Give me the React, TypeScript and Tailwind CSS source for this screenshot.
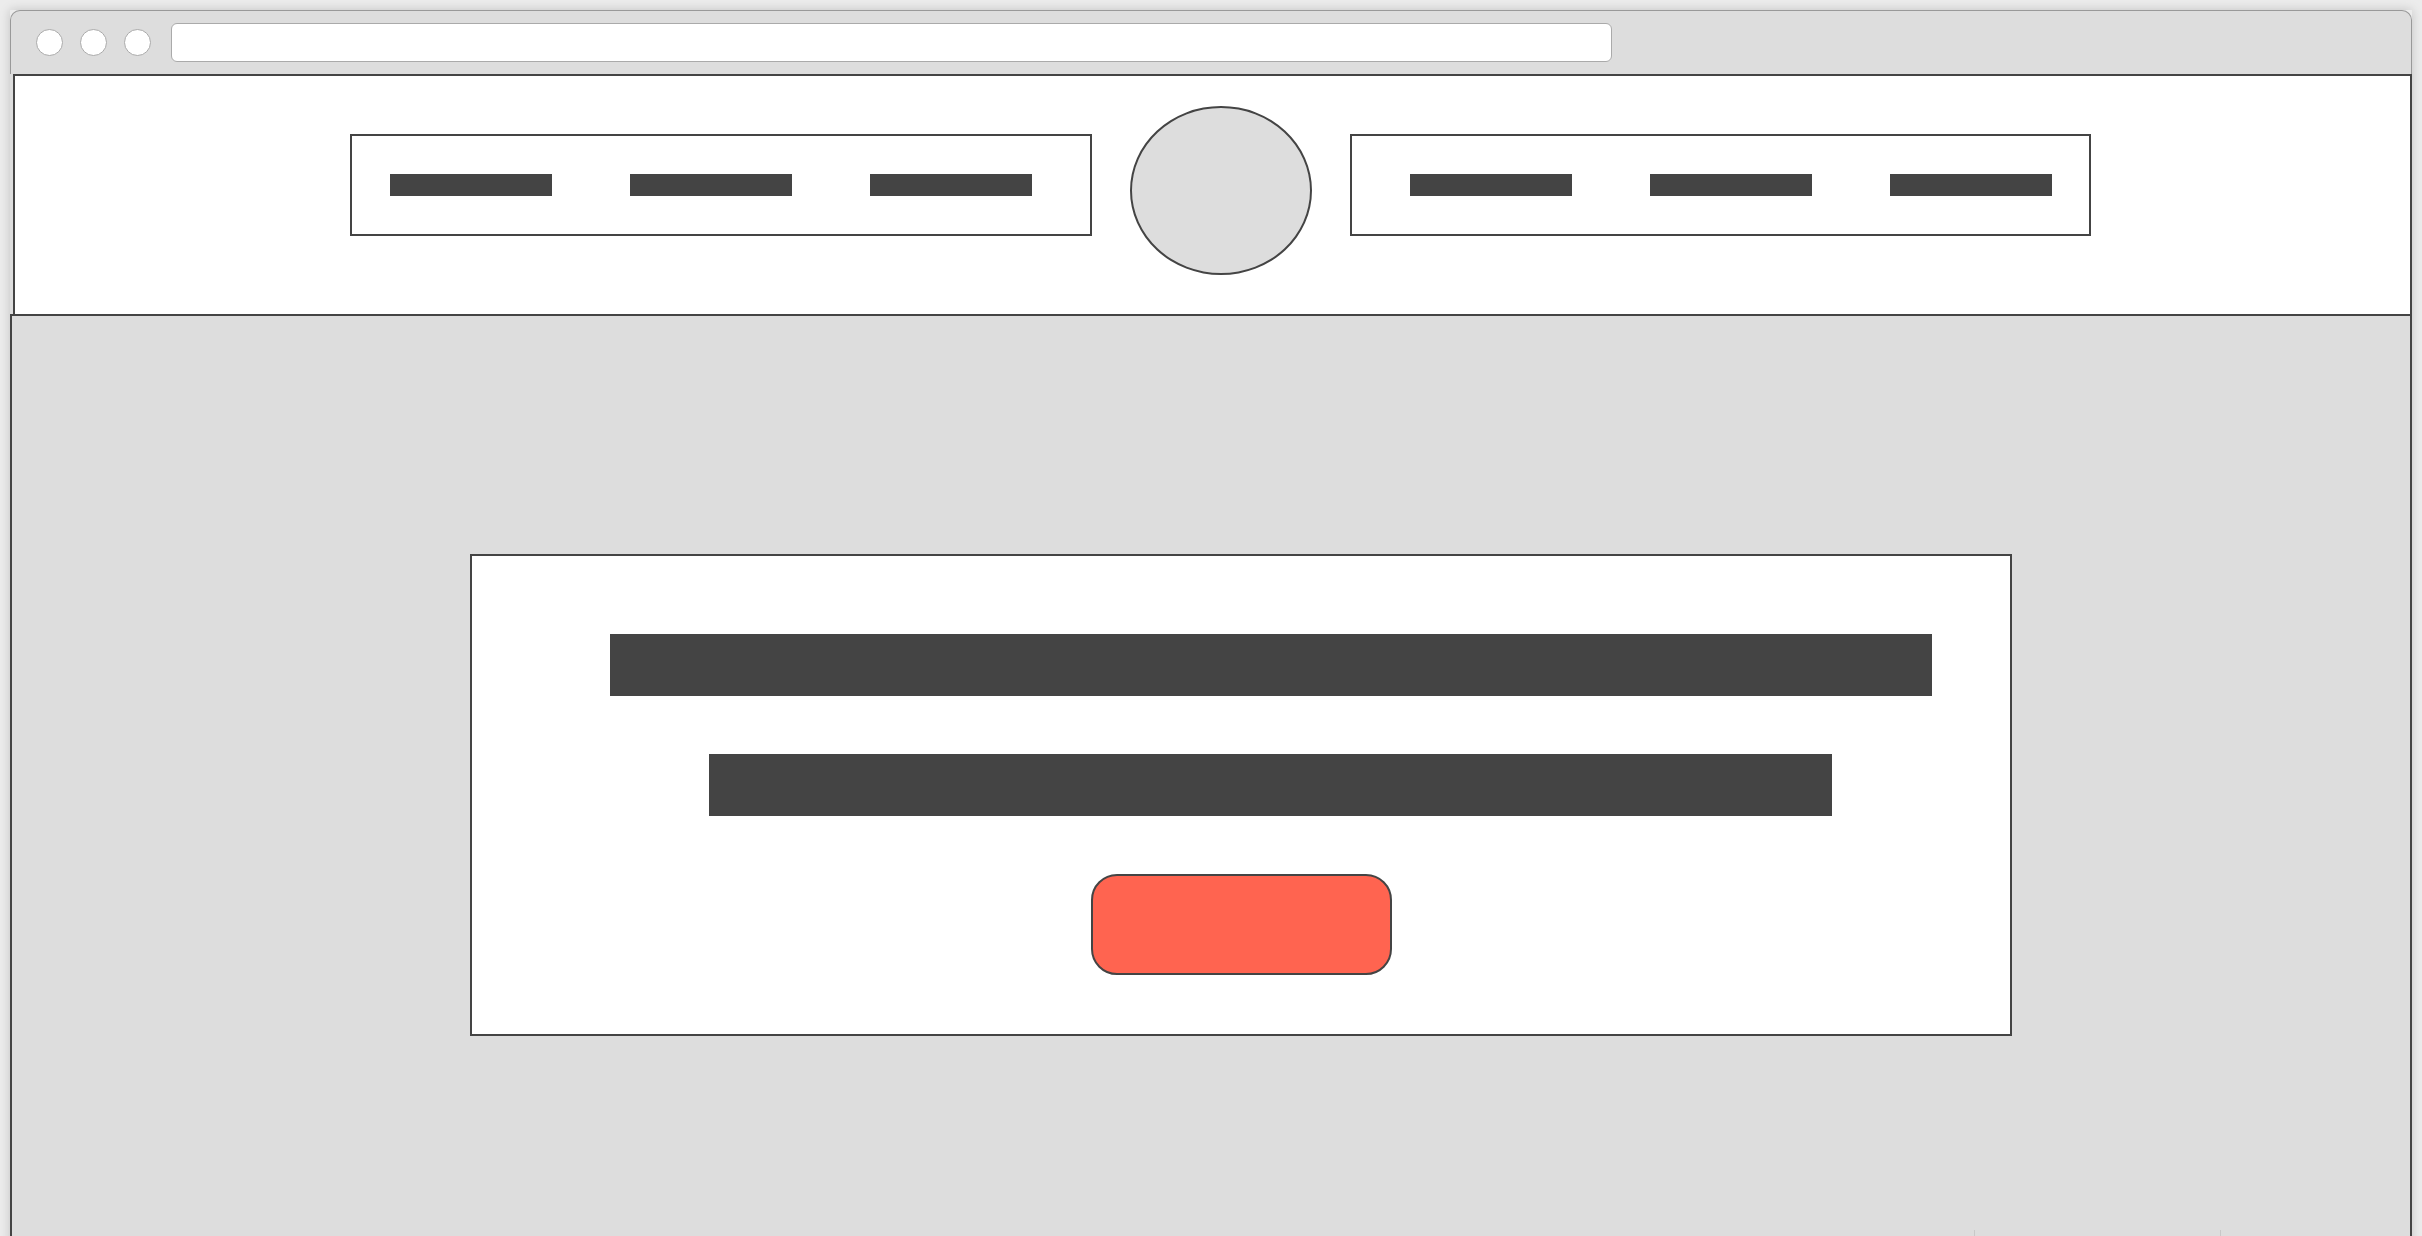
import React from 'react';

const NavBox: React.FC<{ side: 'left' | 'right' }> = ({ side }) => (
  <div
    className={
      side === 'left'
        ? 'mt-[58px] flex h-[102px] w-[742px] shrink-0 items-center gap-[78px] border-2 border-[#444] pl-[38px]'
        : 'mt-[58px] ml-[38px] flex h-[102px] w-[741px] shrink-0 items-center gap-[78px] border-2 border-[#444] pl-[58px]'
    }
  >
    {[0, 1, 2].map((i) => (
      <div key={i} className="h-[22px] w-[162px] bg-[#444]" />
    ))}
  </div>
);

export default function App() {
  return (
    <div className="relative h-[1236px] w-[2422px] overflow-hidden bg-[#ececec] pl-[10px] pt-[10px]">
      <div className="flex h-[1300px] w-[2402px] flex-col shadow-[0_0_10px_rgba(0,0,0,0.18)]">
        {/* browser chrome */}
        <div className="flex h-[64px] shrink-0 items-center rounded-t-[10px] border-x border-t-[1.5px] border-[#999] bg-[#ddd] pl-[25px]">
          <div className="flex gap-[17px]">
            {[0, 1, 2].map((i) => (
              <div key={i} className="h-[27px] w-[27px] rounded-full border-[1.5px] border-[#aaa] bg-white" />
            ))}
          </div>
          <div className="ml-[20px] mt-[-1px] h-[39px] w-[1441px] rounded-[6px] border-[1.5px] border-[#aaa] bg-white" />
        </div>

        {/* header */}
        <div className="shrink-0 bg-[#ddd] pl-[3px]">
          <header className="flex h-[240px] items-start border-x-2 border-t-2 border-[#444] bg-white pl-[335px]">
            <NavBox side="left" />
            <div className="ml-[38px] mt-[30px] h-[169px] w-[182px] shrink-0 rounded-[50%] border-2 border-[#444] bg-[#ddd]" />
            <NavBox side="right" />
          </header>
        </div>

        {/* content */}
        <main className="relative flex-1 border-2 border-b-0 border-[#444] bg-[#ddd]">
          <section className="ml-[458px] mt-[238px] flex h-[482px] w-[1542px] flex-col border-2 border-[#444] bg-white">
            <div className="ml-[138px] mt-[78px] h-[62px] w-[1322px] bg-[#444]" />
            <div className="ml-[237px] mt-[58px] h-[62px] w-[1123px] bg-[#444]" />
            <button
              type="button"
              className="ml-[619px] mt-[58px] h-[101px] w-[301px] rounded-[26px] border-2 border-[#444] bg-[#ff6450]"
              aria-label="action"
            />
          </section>
          <div className="absolute left-[1962px] top-[914px] h-[10px] w-px bg-[#c8c8c8]" />
          <div className="absolute left-[2208px] top-[914px] h-[10px] w-px bg-[#c8c8c8]" />
        </main>
      </div>
    </div>
  );
}
